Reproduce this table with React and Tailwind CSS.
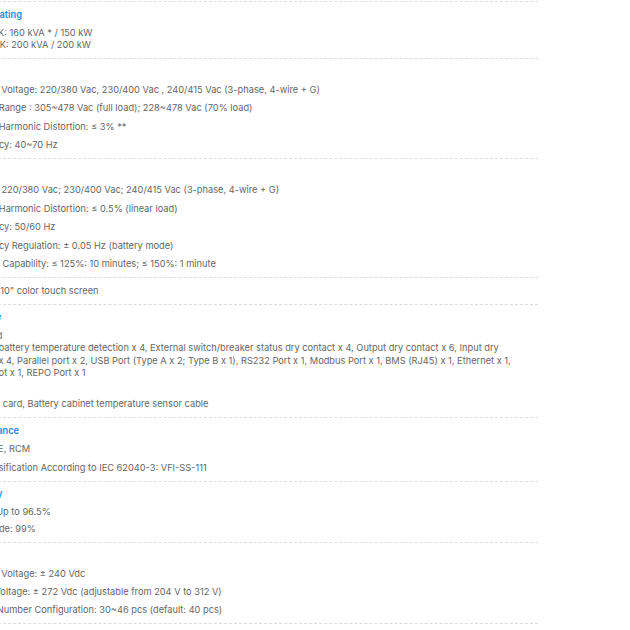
const Row = ({ title, titleClass = "", gap = "gap-[6px]", children }) => (
  <div className={`border-t border-dashed border-[#dcdcdc] py-[6.5px] flex flex-col ${gap}`}>
    {title && (
      <h4 className={`text-[#1a8ce0] font-semibold leading-[12.5px] ${titleClass}`}>{title}</h4>
    )}
    {children}
  </div>
);

const Item = ({ className = "", children }) => (
  <p className={`leading-[12.5px] whitespace-nowrap ${className}`}>{children}</p>
);

export default function App() {
  return (
    <div className="min-h-screen bg-white overflow-hidden pt-px">
      <div
        className="-ml-[37px] w-[575px] text-[9.25px] text-[#666]"
        style={{ fontFamily: "Inter, 'Noto Sans', sans-serif" }}
      >
        <Row title="Power Rating">
          <div className="leading-[12px] -ml-[4px]">
            <p>DPH-160K: 160 kVA * / 150 kW</p>
            <p>DPH-200K: 200 kVA / 200 kW</p>
          </div>
        </Row>

        <Row title="Input">
          <Item>Nominal Voltage: 220/380 Vac, 230/400 Vac , 240/415 Vac (3-phase, 4-wire + G)</Item>
          <Item>Voltage Range : 305~478 Vac (full load); 228~478 Vac (70% load)</Item>
          <Item>Current Harmonic Distortion: ≤ 3% **</Item>
          <Item>Frequency: 40~70 Hz</Item>
        </Row>

        <Row title="Output">
          <Item>Voltage: 220/380 Vac; 230/400 Vac; 240/415 Vac (3-phase, 4-wire + G)</Item>
          <Item>Voltage Harmonic Distortion: ≤ 0.5% (linear load)</Item>
          <Item>Frequency: 50/60 Hz</Item>
          <Item>Frequency Regulation: ± 0.05 Hz (battery mode)</Item>
          <Item className="-ml-[3px]">Overload Capability: ≤ 125%: 10 minutes; ≤ 150%: 1 minute</Item>
        </Row>

        <Row>
          <Item>Display: 10" color touch screen</Item>
        </Row>

        <Row title="Interface" titleClass="-ml-[2px]">
          <div className="leading-[12.5px]">
            <p>Standard</p>
            <p>Port for battery temperature detection x 4, External switch/breaker status dry contact x 4, Output dry contact x 6, Input dry</p>
            <p>contact x 4, Parallel port x 2, USB Port (Type A x 2; Type B x 1), RS232 Port x 1, Modbus Port x 1, BMS (RJ45) x 1, Ethernet x 1,</p>
            <p>Smart slot x 1, REPO Port x 1</p>
            <p>Optional</p>
          </div>
          <Item>Network card, Battery cabinet temperature sensor cable</Item>
        </Row>

        <Row title="Conformance" titleClass="-ml-[5px]">
          <Item className="-ml-[5px]">Safety: CE, RCM</Item>
          <Item className="-ml-[5px]">UPS Classification According to IEC 62040-3: VFI-SS-111</Item>
        </Row>

        <Row title="Efficiency" titleClass="-ml-[5px]" gap="gap-[5px]">
          <Item>Online: Up to 96.5%</Item>
          <Item>ECO Mode: 99%</Item>
        </Row>

        <Row title="Battery" gap="gap-[5.5px]">
          <Item>Nominal Voltage: ± 240 Vdc</Item>
          <Item className="-ml-[3px]">Charge Voltage: ± 272 Vdc (adjustable from 204 V to 312 V)</Item>
          <Item>Battery Number Configuration: 30~46 pcs (default: 40 pcs)</Item>
        </Row>

        <div className="border-t border-dashed border-[#dcdcdc] h-8" />
      </div>
    </div>
  );
}
